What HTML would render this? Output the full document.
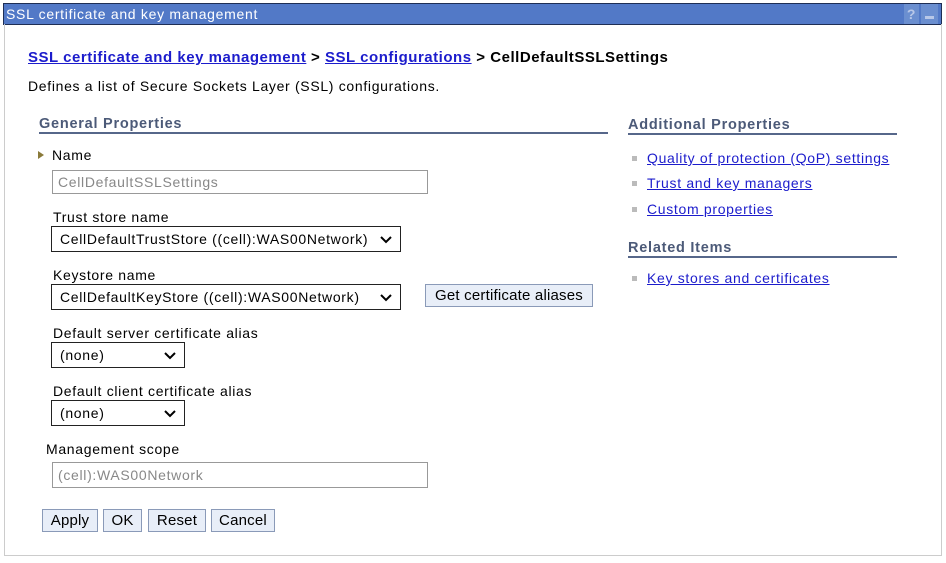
<!DOCTYPE html>
<html><head><meta charset="utf-8"><style>
body{margin:0;width:946px;height:563px;background:#fff;position:relative;font-family:"Liberation Sans",Arial,sans-serif;font-size:14px;color:#000;overflow:hidden;letter-spacing:0.68px}
.a{position:absolute;white-space:nowrap}
.title{left:3px;top:3px;background:#5279c7;border:1px solid #1e2e55;color:#fff;font-size:14px;line-height:20px;padding-left:2px;box-sizing:border-box;width:939px;height:22px;letter-spacing:0.7px}
.panel{left:4px;top:24px;width:936px;height:531px;border:1px solid #ccc;border-top:none}
a{color:#1c1ccc}
.hd{font-weight:bold;color:#4c5a78;font-size:14.5px;letter-spacing:0.75px}
.line{height:2px;background:#56678a}
.inp{border:1px solid #999;box-sizing:border-box;color:#888;padding-left:5px;line-height:22px}
.sel{border:1px solid #222;box-sizing:border-box;padding-left:8px;line-height:24px}
.sel svg{position:absolute;right:8px;top:9px}
.btn{background:#e8eef8;border:1px solid #8a9ab8;box-sizing:border-box;text-align:center;line-height:21px;font-size:15px;letter-spacing:0.2px}
.bul{width:5px;height:5px;background:#bbb}
</style></head><body>
<div class="a title">SSL certificate and key management</div>
<div class="a" style="left:904px;top:4px;width:15px;height:20px;background:#6b8fd0;color:#b8c8e8;font-weight:bold;text-align:center;line-height:20px">?</div>
<div class="a" style="left:921px;top:4px;width:17px;height:20px;background:#6b8fd0"><div class="a" style="left:4px;top:12px;width:9px;height:3px;background:#b8c8e8"></div></div>
<div class="a panel"></div>
<div class="a" style="left:28px;top:49px;font-weight:bold;font-size:15px;letter-spacing:0.52px"><a href="#">SSL certificate and key management</a> &gt; <a href="#">SSL configurations</a> &gt; CellDefaultSSLSettings</div>
<div class="a" style="left:28px;top:78px">Defines a list of Secure Sockets Layer (SSL) configurations.</div>
<div class="a hd" style="left:39px;top:116px">General Properties</div>
<div class="a line" style="left:39px;top:132px;width:569px"></div>
<div class="a" style="left:38px;top:151px;width:0;height:0;border-left:6px solid #8a7a3a;border-top:4px solid transparent;border-bottom:4px solid transparent"></div>
<div class="a" style="left:52px;top:147px">Name</div>
<div class="a inp" style="left:52px;top:170px;width:376px;height:24px">CellDefaultSSLSettings</div>
<div class="a" style="left:53px;top:209px">Trust store name</div>
<div class="a sel" style="left:51px;top:226px;width:350px;height:26px">CellDefaultTrustStore ((cell):WAS00Network)<svg width="12" height="8"><path d="M1 1l5 5 5-5" stroke="#000" stroke-width="2" fill="none"/></svg></div>
<div class="a" style="left:53px;top:267px">Keystore name</div>
<div class="a sel" style="left:51px;top:284px;width:350px;height:26px">CellDefaultKeyStore ((cell):WAS00Network)<svg width="12" height="8"><path d="M1 1l5 5 5-5" stroke="#000" stroke-width="2" fill="none"/></svg></div>
<div class="a btn" style="left:425px;top:284px;width:168px;height:23px">Get certificate aliases</div>
<div class="a" style="left:53px;top:325px">Default server certificate alias</div>
<div class="a sel" style="left:51px;top:342px;width:134px;height:26px">(none)<svg width="12" height="8"><path d="M1 1l5 5 5-5" stroke="#000" stroke-width="2" fill="none"/></svg></div>
<div class="a" style="left:53px;top:383px">Default client certificate alias</div>
<div class="a sel" style="left:51px;top:400px;width:134px;height:26px">(none)<svg width="12" height="8"><path d="M1 1l5 5 5-5" stroke="#000" stroke-width="2" fill="none"/></svg></div>
<div class="a" style="left:46px;top:441px">Management scope</div>
<div class="a inp" style="left:52px;top:462px;width:376px;height:26px;line-height:24px">(cell):WAS00Network</div>
<div class="a btn" style="left:42px;top:509px;width:56px;height:23px">Apply</div>
<div class="a btn" style="left:103px;top:509px;width:39px;height:23px">OK</div>
<div class="a btn" style="left:148px;top:509px;width:58px;height:23px">Reset</div>
<div class="a btn" style="left:211px;top:509px;width:64px;height:23px">Cancel</div>
<div class="a hd" style="left:628px;top:117px">Additional Properties</div>
<div class="a line" style="left:628px;top:133px;width:269px"></div>
<div class="a bul" style="left:632px;top:156px"></div><div class="a" style="left:647px;top:150px"><a href="#">Quality of protection (QoP) settings</a></div>
<div class="a bul" style="left:632px;top:181px"></div><div class="a" style="left:647px;top:175px"><a href="#">Trust and key managers</a></div>
<div class="a bul" style="left:632px;top:207px"></div><div class="a" style="left:647px;top:201px"><a href="#">Custom properties</a></div>
<div class="a hd" style="left:628px;top:240px">Related Items</div>
<div class="a line" style="left:628px;top:256px;width:269px"></div>
<div class="a bul" style="left:632px;top:276px"></div><div class="a" style="left:647px;top:270px"><a href="#">Key stores and certificates</a></div>
</body></html>
